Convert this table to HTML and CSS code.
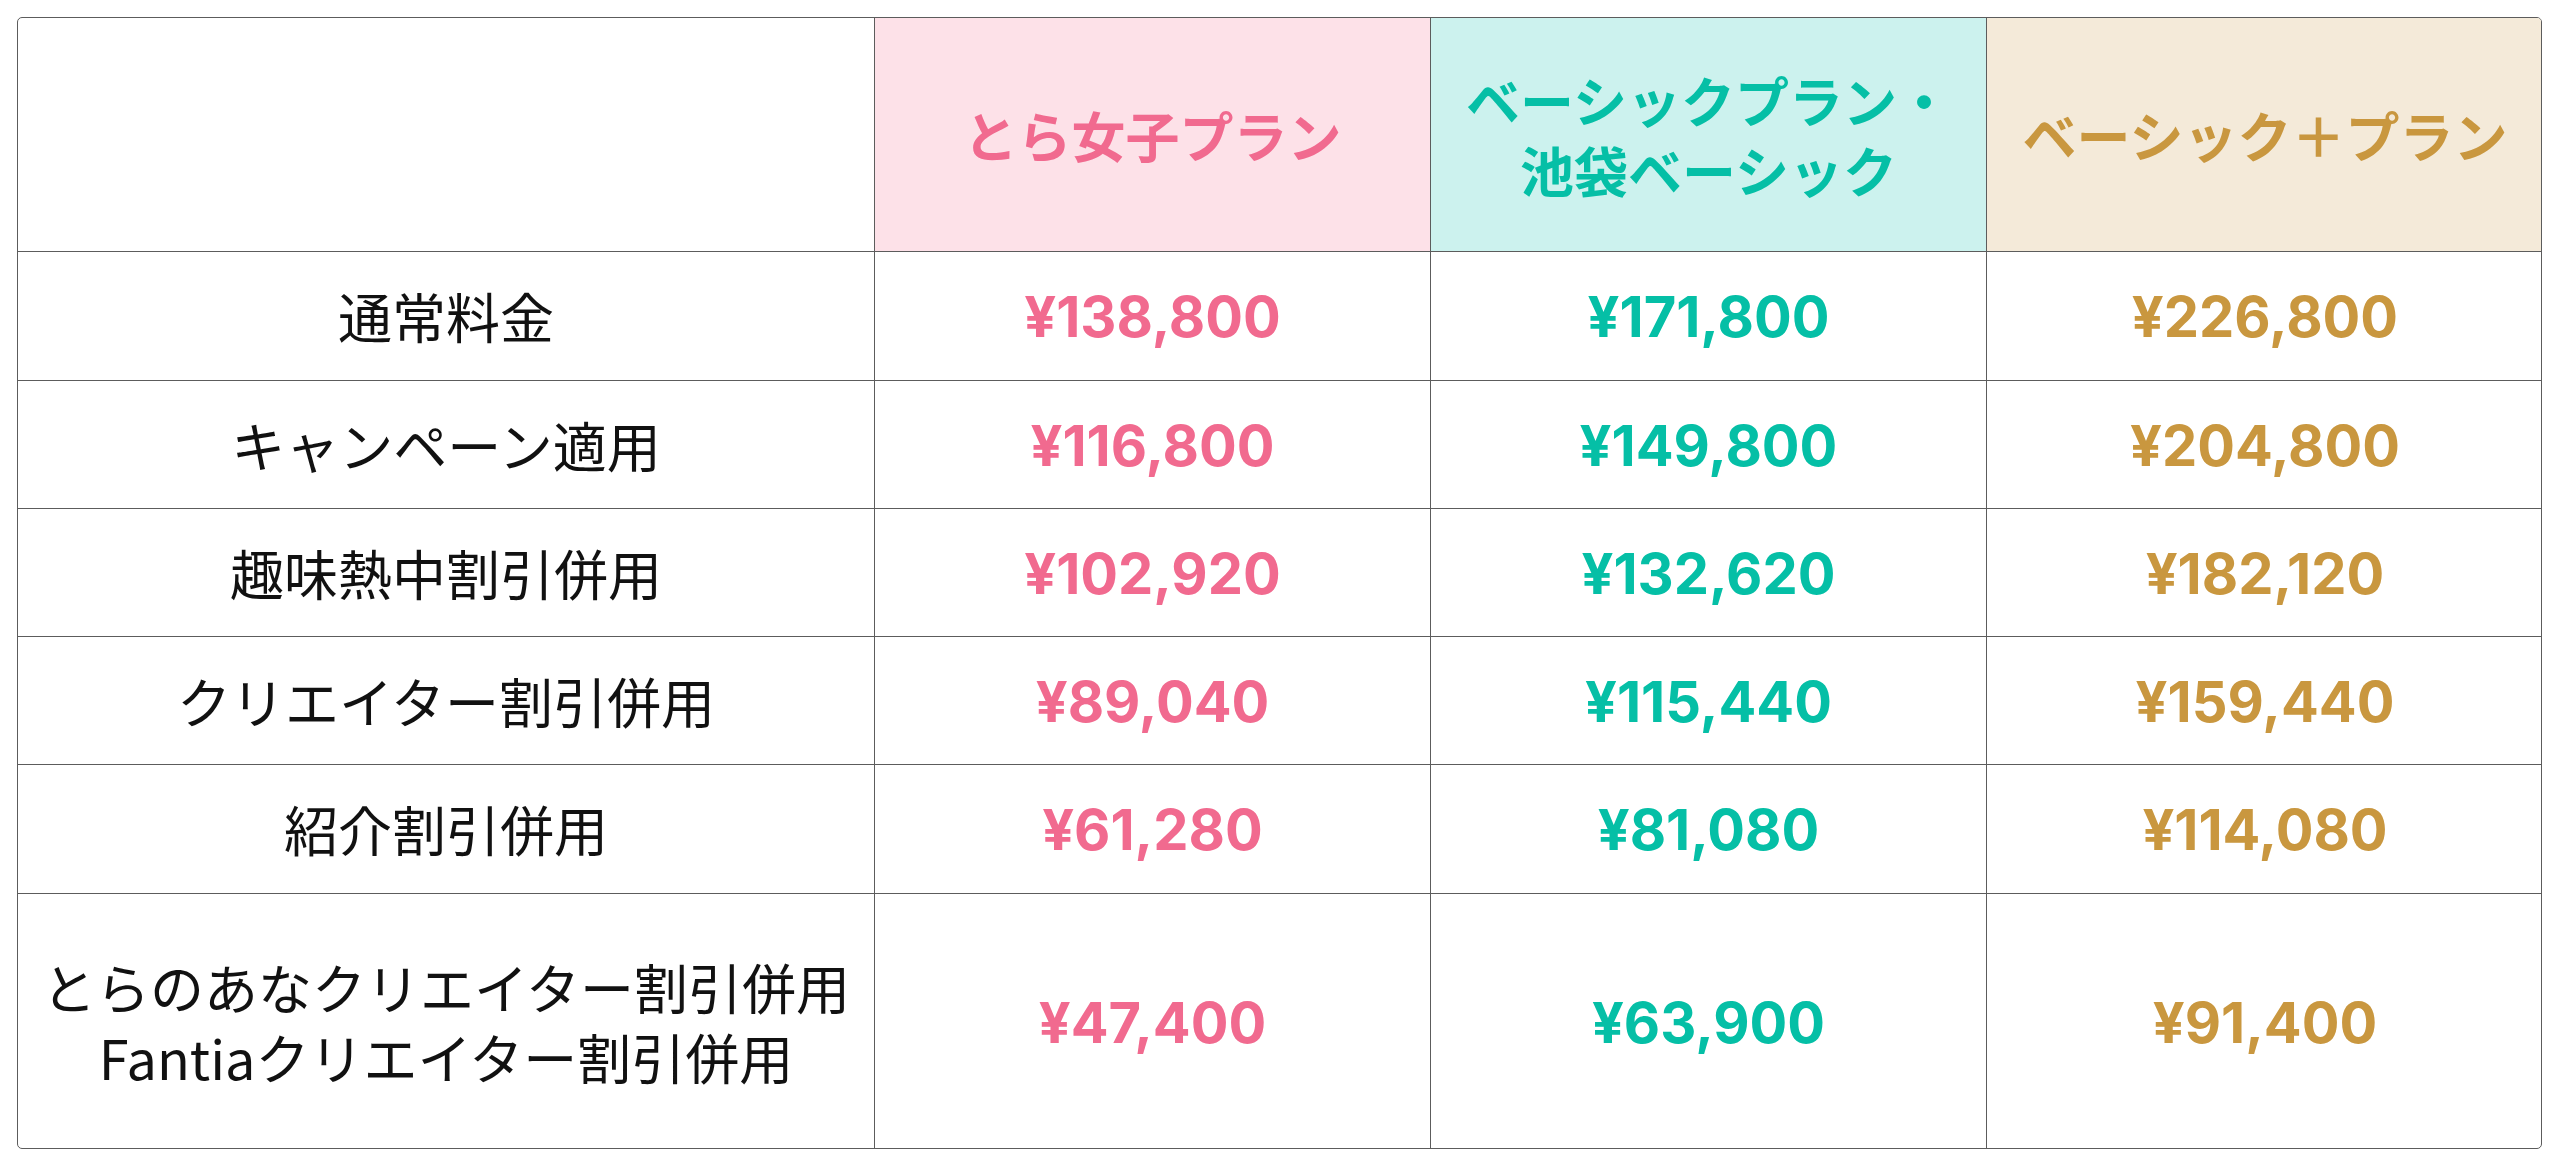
FILE: index.html
```html
<!DOCTYPE html>
<html lang="ja">
<head>
<meta charset="utf-8">
<link rel="stylesheet" href="styles.css">
</head>
<body>
<div class="price-table">
  <div class="cell head blank"></div>
  <div class="cell head pink-bg pink">とら女子プラン</div>
  <div class="cell head teal-bg teal"><div class="stack"><span>ベーシックプラン・</span><span>池袋ベーシック</span></div></div>
  <div class="cell head gold-bg gold last-col">ベーシック＋プラン</div>

  <div class="cell label">通常料金</div>
  <div class="cell price pink">¥138,800</div>
  <div class="cell price teal">¥171,800</div>
  <div class="cell price gold last-col">¥226,800</div>

  <div class="cell label">キャンペーン適用</div>
  <div class="cell price pink">¥116,800</div>
  <div class="cell price teal">¥149,800</div>
  <div class="cell price gold last-col">¥204,800</div>

  <div class="cell label">趣味熱中割引併用</div>
  <div class="cell price pink">¥102,920</div>
  <div class="cell price teal">¥132,620</div>
  <div class="cell price gold last-col">¥182,120</div>

  <div class="cell label">クリエイター割引併用</div>
  <div class="cell price pink">¥89,040</div>
  <div class="cell price teal">¥115,440</div>
  <div class="cell price gold last-col">¥159,440</div>

  <div class="cell label">紹介割引併用</div>
  <div class="cell price pink">¥61,280</div>
  <div class="cell price teal">¥81,080</div>
  <div class="cell price gold last-col">¥114,080</div>

  <div class="cell label last-row"><div class="stack"><span>とらのあなクリエイター割引併用</span><span>Fantiaクリエイター割引併用</span></div></div>
  <div class="cell price pink last-row">¥47,400</div>
  <div class="cell price teal last-row">¥63,900</div>
  <div class="cell price gold last-row last-col">¥91,400</div>
</div>
</body>
</html>
```

FILE: styles.css
```css
html, body {
  margin: 0;
  padding: 0;
  background: #ffffff;
}

body {
  padding: 17px 18px 18px 17px;
  font-family: "Noto Sans CJK JP", "Noto Sans", sans-serif;
  color: #111111;
}

.price-table {
  display: grid;
  grid-template-columns: 857px 556px 556px 556px;
  grid-template-rows: 234px 129px 128px 128px 128px 129px 256px;
  border: 1.5px solid #5c5c5c;
  border-radius: 5px;
  overflow: hidden;
  box-sizing: border-box;
  width: 2525px;
  height: 1132px;
}

.cell {
  display: flex;
  align-items: center;
  justify-content: center;
  text-align: center;
  border-right: 1.5px solid #5c5c5c;
  border-bottom: 1.5px solid #5c5c5c;
  box-sizing: border-box;
}

.last-col { border-right: none; }
.last-row { border-bottom: none; }

.stack {
  display: flex;
  flex-direction: column;
  align-items: center;
}

.stack span {
  display: block;
  height: 70px;
  line-height: 70px;
}

.head {
  font-size: 54px;
  font-weight: 700;
  line-height: 70px;
}

.label {
  font-size: 54px;
  font-weight: 400;
  line-height: 70px;
  color: #111111;
}

.price {
  font-family: "Inter", "Liberation Sans", sans-serif;
  font-weight: 700;
  font-size: 56px;
  padding-top: 2px;
}

.pink { color: #f16a8f; }
.teal { color: #05bfa6; }
.gold { color: #c9973f; }

.pink-bg { background: #fde1e8; }
.teal-bg { background: #ccf2ee; }
.gold-bg { background: #f4ead9; }
```
